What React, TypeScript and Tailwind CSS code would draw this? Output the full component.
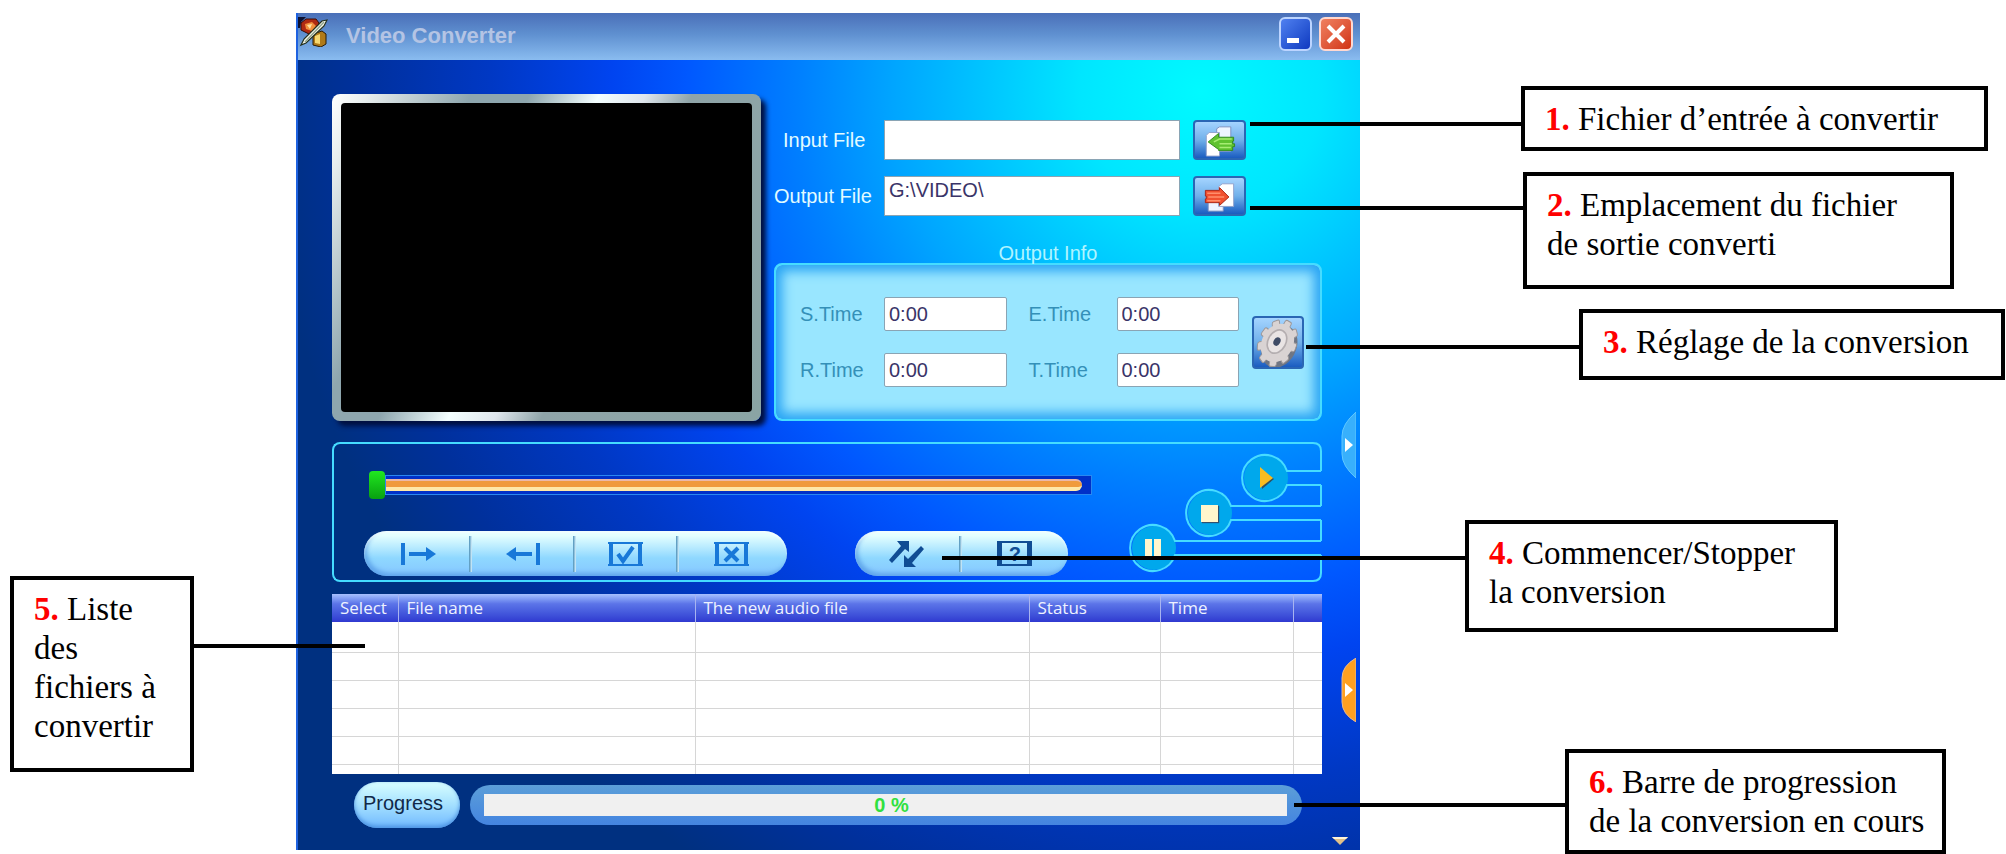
import { useState } from "react";

interface CalloutProps {
    num: number;
    lines: string[];
    box: string;
    leader: string;
}

const rightCallouts: CalloutProps[] = [
    { num: 1, lines: ["Fichier d’entrée à convertir"], box: "ml-[161px] w-[467px] h-[65px]", leader: "right-full top-8 w-[275px]" },
    { num: 2, lines: ["Emplacement du fichier", "de sortie converti"], box: "ml-[163px] mt-[21px] w-[431px] h-[117px]", leader: "right-full top-[30px] w-[277px]" },
    { num: 3, lines: ["Réglage de la conversion"], box: "ml-[219px] mt-5 w-[426px] h-[71px]", leader: "right-full top-8 w-[277px]" },
    { num: 4, lines: ["Commencer/Stopper", "la conversion"], box: "ml-[105px] mt-[140px] w-[373px] h-[112px]", leader: "right-full top-8 w-[527px]" },
    { num: 6, lines: ["Barre de progression", "de la conversion en cours"], box: "ml-[205px] mt-[117px] w-[381px] h-[105px]", leader: "right-full top-[50px] w-[275px]" },
];

const leftCallout: CalloutProps = {
    num: 5,
    lines: ["Liste", "des", "fichiers à", "convertir"],
    box: "ml-[10px] mt-[576px] w-[184px] h-[196px]",
    leader: "left-full top-16 w-[175px]",
};

const Callout = ({ num, lines, box, leader }: CalloutProps) => {
    return (
        <div className={`relative z-10 border-4 border-black bg-white pl-5 pt-[10px] text-[33px] leading-[39px] whitespace-nowrap text-black ${box}`}>
            <span className={`absolute h-1 bg-black ${leader}`} />
            <strong className="text-[#ff0000]">{num}.</strong>{" "}
            {lines.map((line, i) => (
                <span key={line}>
                    {i > 0 && <br />}
                    {line}
                </span>
            ))}
        </div>
    );
};

const AppIcon = () => (
    <svg viewBox="0 0 30 30" className="h-[30px] w-[30px]">
        <path d="M0 0h8L3 5l-1 6H0z" fill="#0b1030" />
        <path d="M3 6l5-4h10l3 4-2 8-8 3-8-4z" fill="#b02a12" stroke="#3a0d05" />
        <path d="M7 7l7-2 4 4-4 5-6-2z" fill="#f3903c" />
        <path d="M9 8l5-1-2 5z" fill="#ffe0a0" />
        <path d="M15 20l3-4 6-2 4 3v10l-5 3-8-2z" fill="#b07a18" stroke="#2b1a04" />
        <path d="M17 19l5-2v10l-5-1z" fill="#f6d870" />
        <path d="M3 28l3-6L24 4l5-1-3 6L8 26z" fill="#f4f6e8" stroke="#24301c" strokeWidth="1.2" />
        <path d="M7 25L26 5" stroke="#8fa28c" strokeWidth="1.4" />
    </svg>
);

const ImportIcon = () => (
    <svg viewBox="0 0 52 38" className="h-[38px] w-full">
        <path d="M23 6l3-2h12v26H23z" fill="#eef5ff" stroke="#7b8fc0" />
        <path d="M12 13l3-3h11v25H12z" fill="#fff" stroke="#8fa0cc" />
        <path d="M14 20l11-9v4h16v4h-1v3h2v3h-2v4H25v-1z" fill="#5fc22f" stroke="#2f8a1c" />
        <path d="M20 20l6-3h13M26 22h13M26 26h12" fill="none" stroke="#a6ec72" strokeWidth="1.6" />
    </svg>
);

const ExportIcon = () => (
    <svg viewBox="0 0 52 38" className="h-[38px] w-full">
        <path d="M14 16h16v18H14z" fill="#eef3ff" stroke="#7b8fc0" />
        <path d="M25 8l4-3h12v24H25z" fill="#fff" stroke="#8fa0cc" />
        <path d="M11 12h15v-3l10 10-10 9v-3H11v-4h1v-3h-1z" fill="#f0502f" stroke="#a82414" />
        <path d="M13 15h14M14 19h17M13 23h14" fill="none" stroke="#ff8e6c" strokeWidth="1.4" />
    </svg>
);

const GearIcon = () => (
    <svg viewBox="4 4 43 43" className="h-full w-full">
        <g transform="rotate(28 25 26)">
            <ellipse cx="28" cy="28" rx="15" ry="20" fill="#6f7684" />
            <g fill="#d9d3d3" stroke="#9a9698">
                {[0, 40, 80, 120, 160, 200, 240, 280, 320].map((a) => (
                    <rect key={a} x="21" y="4" width="8" height="10" rx="2" transform={`translate(25 26) scale(.76 1) rotate(${a}) translate(-25 -26)`} />
                ))}
            </g>
            <ellipse cx="25" cy="26" rx="14" ry="18" fill="#d9d3d3" />
            <ellipse cx="24" cy="25" rx="8" ry="11" fill="#e9e4e4" stroke="#b4aeb0" strokeWidth="1.5" />
            <ellipse cx="24" cy="25" rx="3" ry="4" fill="#3f4c66" />
        </g>
    </svg>
);

const toolIcons = [
    { label: "Set start", icon: <path d="M2 1v22M8 12h18" />, tip: <path d="M25 5l10 7-10 7z" /> },
    { label: "Set end", icon: <path d="M33 1v22M27 12H10" />, tip: <path d="M11 5L1 12l10 7z" /> },
    { label: "Select all", icon: <><path d="M3 0v24M32 0v24" /><path d="M0 1h35M0 23h35" strokeWidth="2" /><path d="M10 12l5 7 10-14" /></>, tip: null },
    { label: "Remove", icon: <><path d="M3 0v24M32 0v24" /><path d="M0 1h35M0 23h35" strokeWidth="2" /><path d="M11 6l13 13M24 6L11 19" /></>, tip: null },
];

const pill = "flex h-[45px] overflow-hidden rounded-full bg-linear-to-b from-[#e4ffff] from-10% via-[#8fd8ff] via-60% to-[#86c6ff] shadow-[inset_0_2px_2px_#ffffff90,inset_3px_-3px_4px_#4a8fe0a0]";
const iconButton = "rounded-sm border-2 border-[#2a66b4] bg-linear-to-b from-[#a4d4ff] via-[#70b0ea] to-[#1a5cc0]";
const textInput = "min-w-0 border border-[#8aa4b4] bg-white px-1 text-xl text-[#3a3468] outline-none";

const VideoConverter = () => {
    const [inputFile, setInputFile] = useState("");
    const [outputFile, setOutputFile] = useState("G:\\VIDEO\\");
    const [times, setTimes] = useState<{ [key: string]: string }>({
        "S.Time": "0:00",
        "E.Time": "0:00",
        "R.Time": "0:00",
        "T.Time": "0:00",
    });
    const [position, setPosition] = useState(0);

    return (
        <main className="relative mt-[13px] border-l-2 border-[#1e62e0] font-['Liberation_Sans',Arial,sans-serif]">
            {/* Title bar */}
            <header className="flex h-[47px] items-start bg-linear-to-b from-[#4a6fb8] via-[#5f90d0] via-45% to-[#8abcf0] pr-[7px] pt-1">
                <AppIcon />
                <h1 className="ml-[18px] flex-1 text-[22px] leading-[38px] font-bold text-[#b4c4e4]">Video Converter</h1>
                <button aria-label="Minimize" className="mr-[7px] flex h-[34px] w-[33px] items-end rounded-md border-2 border-[#bcd4ff] bg-linear-to-br from-[#5080f0] to-[#1038c0] p-[6px]">
                    <span className="h-[5px] w-3 bg-white" />
                </button>
                <button aria-label="Close" className="flex h-[34px] w-[34px] items-center justify-center rounded-md border-2 border-[#ffd8d0] bg-linear-to-br from-[#f08060] to-[#d03010]">
                    <svg viewBox="0 0 20 20" className="h-5 w-5"><path d="M2 2l16 16M18 2L2 18" stroke="#fff" strokeWidth="4" /></svg>
                </button>
            </header>

            <div className="bg-[radial-gradient(ellipse_88%_115%_at_85%_4%,#00faff_0%,#00e6ff_13%,#00a5ff_33%,#0080ff_43%,#0058ff_55%,#0044f0_63%,#0038c4_76%,#00309c_90%,#003080_100%)] pt-[34px] pr-[38px] pb-[22px] pl-[34px]">
                <div className="flex gap-[13px]">
                    {/* Preview screen */}
                    <div className="h-[327px] w-[429px] shrink-0 rounded-lg bg-[linear-gradient(115deg,#ffffff_0%,#e8eeee_6%,#8ea6ae_24%,#8ea6ae_34%,#f4ffff_46%,#dfe6ec_54%,#8fa4a8_62%,#8aa4a4_100%)] p-[9px] shadow-[5px_5px_5px_#001040]">
                        <div className="h-full rounded bg-black" />
                    </div>

                    <div className="min-w-0 flex-1 pt-[26px]">
                        <div className="flex flex-col gap-4 pr-[76px] text-xl text-[#e2fbff]">
                            <div className="flex h-10 items-center">
                                <label htmlFor="input-file" className="w-[110px] shrink-0 pl-[9px]">Input File</label>
                                <input id="input-file" value={inputFile} onChange={(e) => setInputFile(e.target.value)} className={`${textInput} h-full flex-1`} />
                                <button aria-label="Browse input file" className={`${iconButton} ml-[13px] h-full w-[53px] shrink-0`}><ImportIcon /></button>
                            </div>
                            <div className="flex h-10 items-center">
                                <label htmlFor="output-file" className="w-[110px] shrink-0">Output File</label>
                                <input id="output-file" value={outputFile} onChange={(e) => setOutputFile(e.target.value)} className={`${textInput} h-full flex-1 pb-3`} />
                                <button aria-label="Browse output file" className={`${iconButton} ml-[13px] h-full w-[53px] shrink-0`}><ExportIcon /></button>
                            </div>
                        </div>

                        <h2 className="mt-[27px] text-center text-xl leading-5 text-[#b0f4ff]">Output Info</h2>
                        <div className="flex h-[158px] items-center rounded-lg border-2 border-[#46dcff] bg-[#99e6ff] pr-4 pl-6 shadow-[inset_0_0_12px_6px_#28a4f4]">
                            <div className="grid flex-1 grid-cols-[84px_1fr_110px_1fr] items-center gap-y-[22px]">
                                {Object.keys(times).map((name, i) => (
                                    <div key={name} className="contents">
                                        <label htmlFor={name} className={`text-xl text-[#3490b8] ${i % 2 ? "pl-[22px]" : ""}`}>{name}</label>
                                        <input id={name} value={times[name]} onChange={(e) => setTimes({ ...times, [name]: e.target.value })} className={`${textInput} h-[34px] w-full rounded-xs`} />
                                    </div>
                                ))}
                            </div>
                            <button aria-label="Settings" className={`${iconButton} ml-[13px] h-[53px] w-[52px] shrink-0`}><GearIcon /></button>
                        </div>
                    </div>
                </div>

                {/* Controls */}
                <div className="mt-[21px] flex h-[140px]">
                    <div className="min-w-0 flex-1 rounded-l-lg border-y-2 border-l-2 border-[#46dcff] pt-[27px] pl-[30px]">
                        <div className="mr-8 ml-[5px] grid h-7 items-center">
                            <div className="col-start-1 row-start-1 ml-4 border border-[#2a88f0] bg-[#0030c8] py-[3px] pr-[9px]">
                                <div className="h-3 rounded-r-full border-t-2 border-b-4 border-t-[#ecb8a8] border-b-[#ffe8a8] bg-[#f09a3c]" />
                            </div>
                            <input
                                type="range"
                                aria-label="Position"
                                value={position}
                                onChange={(e) => setPosition(Number(e.target.value))}
                                className="col-start-1 row-start-1 h-7 w-full appearance-none bg-transparent [&::-webkit-slider-thumb]:h-7 [&::-webkit-slider-thumb]:w-4 [&::-webkit-slider-thumb]:appearance-none [&::-webkit-slider-thumb]:rounded [&::-webkit-slider-thumb]:bg-linear-to-b [&::-webkit-slider-thumb]:from-[#20e820] [&::-webkit-slider-thumb]:to-[#08a010]"
                            />
                        </div>
                        <div className="mt-8 flex gap-[68px]">
                            <div className={`${pill} w-[423px] px-1`}>
                                {toolIcons.map((tool, i) => (
                                    <button key={tool.label} aria-label={tool.label} className="flex flex-1 items-center justify-center">
                                        <svg viewBox="0 0 35 24" className="mx-auto h-6 w-[35px]" fill="none" stroke="#1878d8" strokeWidth="4">
                                            {tool.icon}
                                            {tool.tip && <g fill="#1878d8" stroke="none">{tool.tip}</g>}
                                        </svg>
                                        {i < 3 && <span className="h-9 w-[3px] bg-linear-to-r from-[#4a90b8] to-[#d8f4ff]" />}
                                    </button>
                                ))}
                            </div>
                            <div className={`${pill} w-[213px]`}>
                                <button aria-label="Convert" className="flex flex-1 items-center justify-center">
                                    <svg viewBox="0 0 36 28" className="mx-auto h-7 w-9" fill="#104c94">
                                        <path d="M8 1h12v11l-4-3L3 23l-3-3L12 6z" />
                                        <path d="M15 27V15l4 4L32 6l3 3-12 14 4 4z" />
                                    </svg>
                                    <span className="h-9 w-[3px] bg-linear-to-r from-[#4a90b8] to-[#d8f4ff]" />
                                </button>
                                <button aria-label="Help" className="flex flex-1 items-center justify-center">
                                    <span className="flex h-[25px] w-[35px] items-center justify-center border-x-[5px] border-y-2 border-[#104c94] text-xl leading-5 font-bold text-[#104c94]">?</span>
                                </button>
                            </div>
                        </div>
                    </div>
                    <div className="relative flex h-[140px] w-[198px] shrink-0 gap-[10px] pl-[6px]">
                        <svg viewBox="0 0 198 140" className="absolute inset-0 h-full w-full" fill="none" stroke="#46dcff" strokeWidth="2">
                            <g fill="#00a8ec" stroke="none">
                                <circle cx="142" cy="36" r="22" />
                                <circle cx="86" cy="71" r="22" />
                                <circle cx="30" cy="106" r="22" />
                            </g>
                            <path d="M197 43h-34a23 23 0 1 1 0-14h34" />
                            <path d="M197 78h-90a23 23 0 1 1 0-14h90" />
                            <path d="M197 113h-146a23 23 0 1 1 0-14h146" />
                            <path d="M0 1h189q8 0 8 8v20M197 43v21M197 78v21M197 113v18q0 8-8 8H0" />
                        </svg>
                        <button aria-label="Pause" className="relative mt-[82px] flex h-[46px] w-[46px] items-center justify-center gap-[2px] rounded-full">
                            <span className="h-[17px] w-[7px] bg-[#fff6cc]" />
                            <span className="h-[17px] w-[7px] bg-[#fff6cc]" />
                        </button>
                        <button aria-label="Stop" className="relative mt-12 flex h-[46px] w-[46px] items-center justify-center rounded-full">
                            <span className="h-[17px] w-[17px] bg-[#fff6cc] shadow-[1px_1px_1px_#305070]" />
                        </button>
                        <button aria-label="Play" className="relative mt-[13px] flex h-[46px] w-[46px] items-center justify-center rounded-full">
                            <svg viewBox="0 0 16 24" className="ml-1 h-6 w-4"><path d="M2 3l13 10L3 23z" fill="#305060" /><path d="M1 1l13 11L1 22z" fill="#f8bc20" /></svg>
                        </button>
                    </div>
                </div>

                {/* File list */}
                <table className="mt-3 w-full table-fixed border-collapse bg-white font-['Open_Sans',sans-serif] text-[17px]">
                    <thead>
                        <tr className="h-7 bg-linear-to-b from-[#a8c0ff] via-[#5c74e8] via-35% to-[#3038d0] text-left text-[#eef2ff]">
                            <th className="w-[66px] border-r border-[#a8b4f0] p-0 pl-2 leading-7 font-normal">Select</th>
                            <th className="w-[30%] border-r border-[#a8b4f0] p-0 pl-2 leading-7 font-normal">File name</th>
                            <th className="border-r border-[#a8b4f0] p-0 pl-2 leading-7 font-normal">The new audio file</th>
                            <th className="w-[131px] border-r border-[#a8b4f0] p-0 pl-2 leading-7 font-normal">Status</th>
                            <th className="w-[133px] border-r border-[#a8b4f0] p-0 pl-2 leading-7 font-normal">Time</th>
                            <th className="w-[29px] p-0" />
                        </tr>
                    </thead>
                    <tbody>
                        {["h-[30px]", "h-7", "h-7", "h-7", "h-7", "h-[10px]"].map((height, row) => (
                            <tr key={row} className={`${height} border-b border-[#d6d6d6] last:border-b-0`}>
                                {[0, 1, 2, 3, 4, 5].map((col) => (
                                    <td key={col} className="border-r border-[#d6d6d6] p-0 last:border-r-0" />
                                ))}
                            </tr>
                        ))}
                    </tbody>
                </table>

                {/* Progress */}
                <div className="mt-2 flex h-[46px] items-center gap-[10px] pr-5 pl-[22px]">
                    <button className="h-full w-[106px] rounded-full bg-linear-to-b from-[#d8ffff] via-[#a4e0ff] to-[#70b8ff] pr-2 pb-1 text-xl text-[#102848] shadow-[inset_0_-2px_4px_#4a90e0]">Progress</button>
                    <div className="flex h-10 flex-1 items-center rounded-full bg-linear-to-b from-[#5c9ed8] to-[#4484e0] pr-[15px] pl-[14px]">
                        <div role="progressbar" aria-label="Progress" aria-valuenow={0} className="h-[22px] flex-1 bg-[#f0f0f0] pl-3 text-center text-xl leading-[22px] font-bold text-[#30e040]">0 %</div>
                    </div>
                </div>
            </div>

            {/* Side tabs */}
            <button aria-label="Open effects panel" className="absolute top-[399px] right-1 h-[66px] w-[15px]">
                <svg viewBox="0 0 15 66" className="h-full w-full"><path d="M15 0Q1 12 1 24v18q0 12 14 24z" fill="#38b0fc" stroke="#60c8ff" /><path d="M4 26l8 7-8 7z" fill="#fff" /></svg>
            </button>
            <button aria-label="Open list panel" className="absolute top-[645px] right-1 h-[64px] w-[15px]">
                <svg viewBox="0 0 15 64" className="h-full w-full"><path d="M15 0Q1 8 1 20v24q0 12 14 20z" fill="#ffa020" stroke="#e8b890" /><path d="M4 25l8 7-8 7z" fill="#fff" /></svg>
            </button>
            <button aria-label="Expand" className="absolute right-3 bottom-1 h-[10px] w-4">
                <svg viewBox="0 0 16 10" className="h-full w-full"><path d="M0 1h16L8 9z" fill="#e0c088" /><path d="M0 1h16l-2 2H2z" fill="#fff4d8" /></svg>
            </button>
        </main>
    );
};

const App: React.FC = () => {
    return (
        <div className="grid grid-cols-[296px_minmax(900px,1fr)_646px] items-start bg-white font-['Liberation_Serif','Times_New_Roman',serif]">
            <aside>
                <Callout {...leftCallout} />
            </aside>
            <VideoConverter />
            <aside className="pt-[86px]">
                {rightCallouts.map((item) => (
                    <Callout key={item.num} {...item} />
                ))}
            </aside>
        </div>
    );
};

export default App;
